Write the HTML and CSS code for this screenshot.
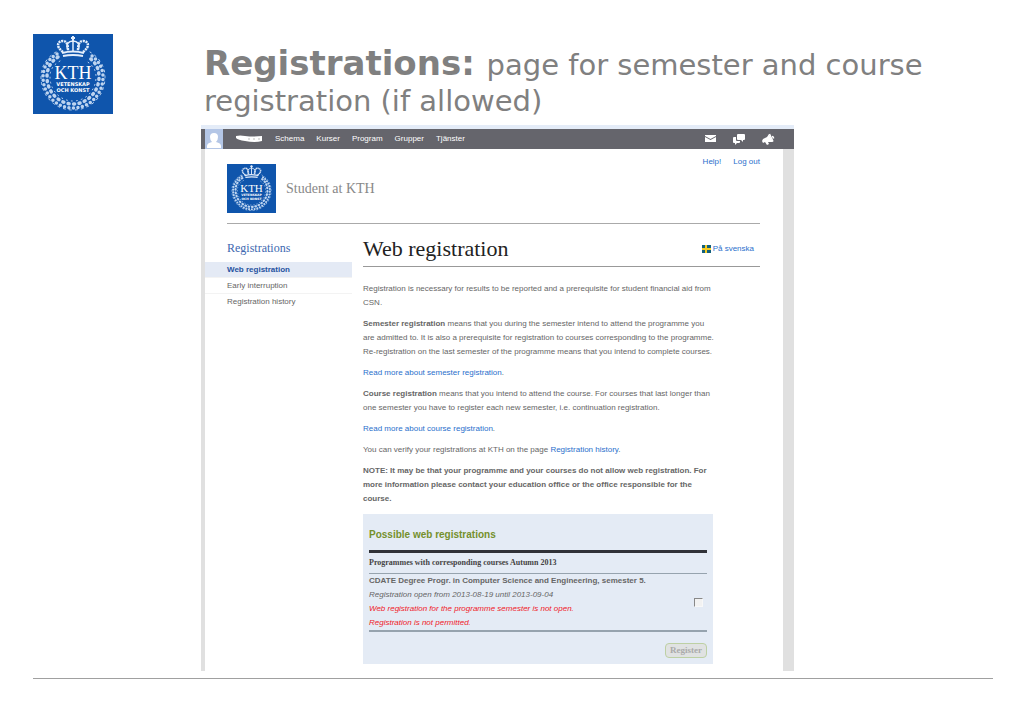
FILE: index.html
```html
<!DOCTYPE html>
<html lang="en">
<head>
    <meta charset="UTF-8">
    <meta name="viewport" content="width=device-width, initial-scale=1.0">
    <title>Registrations</title>
    <link rel="stylesheet" href="styles.css">
</head>
<body>

    <!-- KTH logo, used twice -->
    <svg class="defs" aria-hidden="true">
        <symbol id="kth" viewBox="0 0 80 80">
            <rect width="80" height="80" fill="#0f55ac"/>
            <!-- Wreath -->
            <g fill="none" stroke="#bdd4f0" stroke-linecap="round">
                <path d="M24 20C15 25 10 34 10 43c0 17 13 31 30 31s30-14 30-31c0-9-5-18-14-23" stroke-width="3.500" stroke-dasharray="0 4.500"/>
                <path d="M25 23C17 28 14 35 14 43c0 15 12 27 26 27s26-12 26-27c0-8-3-15-11-20" stroke-width="3.500" stroke-dasharray="1 4.500"/>
                <path d="M27 27C20 31 17 36 17 43c0 13 10 24 23 24s23-11 23-24c0-7-3-12-10-16" stroke-width="1" stroke-dasharray="1 4"/>
                <path d="M23 18C13 24 8 33 8 43c0 19 14 33 32 33s32-14 32-33c0-10-5-19-15-25" stroke-width="1" stroke-dasharray="2 4"/>
            </g>
            <!-- Crown -->
            <g fill="none" stroke="#e4eefb">
                <path d="M30 18C22 12 25 7 30 7c4 0 5 4 5 10M50 18c8-6 5-11 0-11-4 0-5 4-5 10" stroke-width="2.500" stroke-dasharray="2 .8"/>
                <path d="M35 16c-3-6 1-9 5-9s8 3 5 9M40 7v10" stroke-width="1.500"/>
                <path d="M40 2v5M38 4h4" stroke-width="2"/>
                <path d="M29 19q11-3 22 0M30 22q10-2 20 0" stroke-width="2"/>
            </g>
            <g fill="#fff" text-anchor="middle">
                <text class="logo-name" x="40" y="45">KTH</text>
                <text class="logo-motto" x="40" y="52">VETENSKAP</text>
                <text class="logo-motto" x="40" y="58">OCH KONST</text>
            </g>
        </symbol>
    </svg>

    <div class="slide">
        <header class="slide-header">
            <svg class="slide-logo" role="img" aria-label="KTH"><use href="#kth"/></svg>
            <h1 class="slide-title"><strong>Registrations: </strong>page for semester and course registration (if allowed)</h1>
        </header>

        <div class="portal">
            <nav class="topbar">
                <svg class="avatar" viewBox="0 0 18 20" aria-hidden="true">
                    <rect width="18" height="20" fill="#b4c6e6"/>
                    <path d="M2 19v-2q0-3 5-4-2-2-2-5 0-4 4-4t4 4q0 3-2 5 5 1 5 4v2z" fill="#fff"/>
                </svg>
                <svg class="hidden-name" viewBox="0 0 28 8" aria-hidden="true">
                    <path d="M1 1q4-1 9 0 9 1 17 0v5q-7 2-17 0Q3 5 1 3z" fill="#fff"/>
                    <path d="M13 4h2M18 4h2M23 4h2" stroke="#bbb" stroke-width="1"/>
                </svg>
                <a href="#">Schema</a>
                <a href="#">Kurser</a>
                <a href="#">Program</a>
                <a href="#">Grupper</a>
                <a href="#">Tjänster</a>
                <div class="topbar-icons">
                    <svg viewBox="0 0 14 12" role="img" aria-label="Mail">
                        <path d="M2 2h11v1L7.500 6 2 3z M2 4l5.500 3L13 4v5H2z" fill="#fff"/>
                    </svg>
                    <svg viewBox="0 0 14 12" role="img" aria-label="Chat">
                        <path d="M6 1h6q1 0 1 1v4q0 1-1 1h-1v2L9 7H6Q5 7 5 6V2q0-1 1-1z" fill="#fff"/>
                        <path d="M2 4h2v3q0 1 1 1h3v1q0 1-1 1H5l-2 2v-2H2q-1 0-1-1V5q0-1 1-1z" fill="#fff"/>
                    </svg>
                    <svg viewBox="0 0 14 12" role="img" aria-label="News">
                        <path d="M8 1 6 4 2 6 1 8l1 2 2-1 2 3 2-1-1-2 5 0z" fill="#fff"/>
                        <path d="M8.500 1 12 8.500M11 3.500q1.500 0 1.500 2" fill="none" stroke="#fff" stroke-width="1.500"/>
                    </svg>
                </div>
            </nav>

            <div class="page">
                <div class="page-header">
                    <svg class="page-logo" role="img" aria-label="KTH"><use href="#kth"/></svg>
                    <div class="site-name">Student at KTH</div>
                    <div class="user-links">
                        <a href="#">Help!</a>
                        <a href="#">Log out</a>
                    </div>
                </div>

                <div class="columns">
                    <nav class="sidebar">
                        <h2>Registrations</h2>
                        <a href="#" class="active">Web registration</a>
                        <a href="#">Early interruption</a>
                        <a href="#">Registration history</a>
                    </nav>

                    <main class="content">
                        <div class="content-header">
                            <h2>Web registration</h2>
                            <a href="#" class="language">
                                <svg class="flag" viewBox="0 0 9 8" aria-hidden="true">
                                    <rect width="9" height="8" fill="#12607c"/>
                                    <path d="M3 0h2v3h4v2H5v3H3V5H0V3h3z" fill="#f5cb22"/>
                                </svg>
                                På svenska
                            </a>
                        </div>

                        <div class="text">
                            <p>Registration is necessary for results to be reported and a prerequisite for student financial aid from CSN.</p>
                            <p><strong>Semester registration</strong> means that you during the semester intend to attend the programme you are admitted to. It is also a prerequisite for registration to courses corresponding to the programme. Re-registration on the last semester of the programme means that you intend to complete courses.</p>
                            <p><a href="#">Read more about semester registration</a>.</p>
                            <p><strong>Course registration</strong> means that you intend to attend the course. For courses that last longer than one semester you have to register each new semester, i.e. continuation registration.</p>
                            <p><a href="#">Read more about course registration</a>.</p>
                            <p>You can verify your registrations at KTH on the page <a href="#">Registration history</a>.</p>
                            <p><strong>NOTE: It may be that your programme and your courses do not allow web registration. For more information please contact your education office or the office responsible for the course.</strong></p>
                        </div>

                        <form class="registrations">
                            <h3>Possible web registrations</h3>
                            <h4>Programmes with corresponding courses Autumn 2013</h4>
                            <div class="programme">
                                <label for="cdate">
                                    <strong>CDATE Degree Progr. in Computer Science and Engineering, semester 5.</strong>
                                    <em>Registration open from 2013-08-19 until 2013-09-04</em>
                                    <em class="error">Web registration for the programme semester is not open.</em>
                                    <em class="error">Registration is not permitted.</em>
                                </label>
                                <input type="checkbox" id="cdate" disabled>
                            </div>
                            <button type="button" disabled>Register</button>
                        </form>
                    </main>
                </div>
            </div>
        </div>
    </div>

</body>
</html>
```
FILE: styles.css
```css
* {
    box-sizing: border-box;
}

body {
    margin: 0;
    background-color: #fff;
    color: #666;
    font-family: "Liberation Sans", Arial, sans-serif;
    font-size: 8px;
    line-height: 14px;
}

a {
    color: #2a6fcc;
    text-decoration: none;
}

h1, h2, h3, h4, p {
    margin: 0;
}

.defs {
    display: none;
}

/* Slide */
.slide {
    margin: 0 30px 0 33px;
    padding: 34px 0 7px;
    border-bottom: 1px solid #a0a0a0;
}

.slide-header {
    display: flex;
    align-items: flex-start;
    gap: 91px;
    height: 91px;
}

.slide-logo {
    flex: none;
    width: 80px;
    height: 80px;
}

.slide-title {
    padding-top: 11px;
    color: #808080;
    font-family: Verdana, "DejaVu Sans", sans-serif;
    font-size: 29px;
    font-weight: normal;
    line-height: 36px;
}

.slide-title strong {
    font-size: 34px;
    line-height: 36px;
}

.logo-name {
    font-family: "Liberation Serif", serif;
    font-size: 18px;
}

.logo-motto {
    font-family: Verdana, "DejaVu Sans", sans-serif;
    font-size: 5px;
    font-weight: bold;
}

/* Portal window */
.portal {
    margin: 0 199px 0 168px;
    border-top: 4px solid #e4ecf8;
}

.topbar {
    display: flex;
    align-items: center;
    gap: 12px;
    height: 20px;
    padding: 0 19px 0 4px;
    background-color: #65656c;
}

.topbar a {
    color: #fff;
}

.avatar {
    width: 18px;
    height: 20px;
}

.hidden-name {
    width: 28px;
    height: 8px;
}

.topbar-icons {
    display: flex;
    gap: 15px;
    margin-left: auto;
}

.topbar-icons svg {
    width: 14px;
    height: 12px;
}

.page {
    padding: 15px 23px 7px 22px;
    border-left: 4px solid #e0e0e0;
    border-right: 11px solid #e0e0e0;
}

.page-header {
    display: flex;
    align-items: center;
    height: 60px;
    padding-bottom: 10px;
    border-bottom: 1px solid #aaa;
}

.page-logo {
    width: 49px;
    height: 49px;
}

.site-name {
    margin-left: 10px;
    color: #888;
    font-family: Garamond, "Liberation Serif", serif;
    font-size: 14px;
}

.user-links {
    display: flex;
    align-self: flex-start;
    gap: 12px;
    margin: -9px 0 0 auto;
}

.columns {
    display: grid;
    grid-template-columns: 125px 1fr;
    column-gap: 11px;
    padding-top: 16px;
}

/* Left menu */
.sidebar h2 {
    margin-bottom: 6px;
    color: #4068b0;
    font-family: Garamond, "Liberation Serif", serif;
    font-size: 12px;
    font-weight: normal;
    line-height: 16px;
}

.sidebar a {
    display: block;
    margin-left: -22px;
    padding-left: 22px;
    border-bottom: 1px solid #f3f3f3;
    color: #666;
    line-height: 15px;
}

.sidebar a:last-child {
    border-bottom: none;
}

.sidebar .active {
    background-color: #e4eaf5;
    color: #2552a0;
    font-weight: bold;
}

/* Content */
.content-header {
    display: flex;
    align-items: center;
    justify-content: space-between;
    padding: 0 6px 8px 0;
    border-bottom: 1px solid #999;
}

.content-header h2 {
    color: #222;
    font-family: Garamond, "Liberation Serif", serif;
    font-size: 22px;
    font-weight: normal;
    line-height: 18px;
}

.language {
    display: flex;
    align-items: center;
    gap: 2px;
}

.flag {
    width: 9px;
    height: 8px;
}

.text {
    padding-top: 15px;
    margin-right: 46px;
}

.text p {
    margin-bottom: 7px;
}

/* Registration box */
.registrations {
    display: flex;
    flex-direction: column;
    margin: 8px 47px 0 0;
    padding: 14px 6px 6px;
    background-color: #e4ebf5;
}

.registrations h3 {
    padding-bottom: 8px;
    border-bottom: 3px solid #303238;
    color: #75902c;
    font-size: 10px;
}

.registrations h4 {
    padding: 3px 0;
    border-bottom: 1px solid #96a3ae;
    color: #444;
    font-family: "Liberation Serif", serif;
    font-size: 8px;
}

.programme {
    display: flex;
    align-items: center;
    justify-content: space-between;
    padding-right: 4px;
    border-bottom: 2px solid #96a3ae;
}

.programme strong,
.programme em {
    display: block;
}

.programme .error {
    color: #f02028;
}

.programme input {
    appearance: none;
    width: 9px;
    height: 9px;
    margin: 0;
    border: 1px solid #f8f8f8;
    border-top-color: #888;
    border-left-color: #888;
    background-color: #f2f2f2;
}

.registrations button {
    align-self: flex-end;
    height: 15px;
    margin-top: 11px;
    padding: 0 4px;
    border: 1px solid #bdd0a4;
    border-radius: 4px;
    background-color: #e0e2e2;
    color: #aaa;
    font-family: "Liberation Serif", serif;
    font-size: 9px;
    font-weight: bold;
    line-height: 13px;
}
```
